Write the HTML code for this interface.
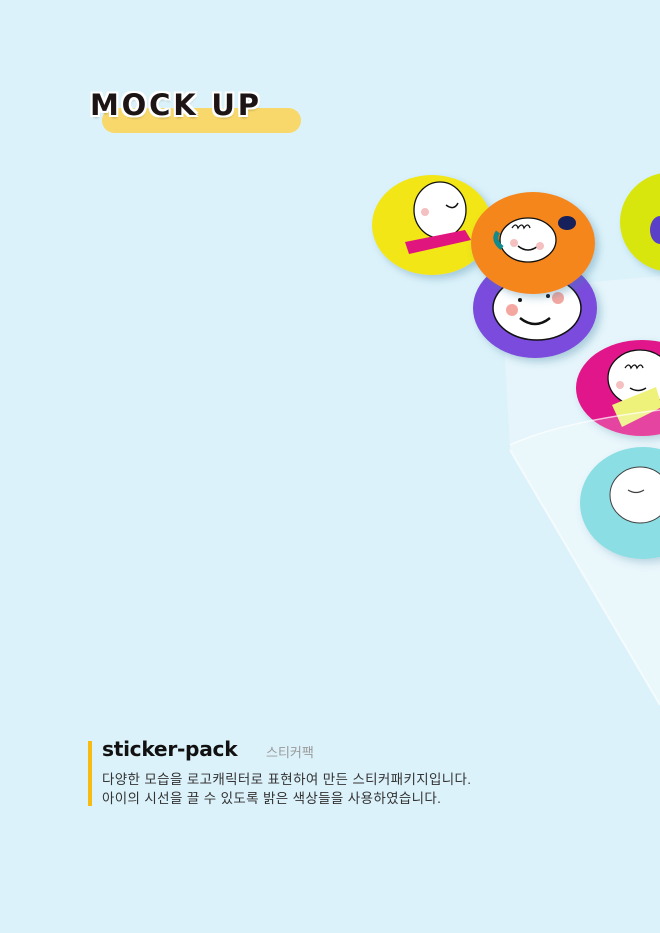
<!DOCTYPE html>
<html><head><meta charset="utf-8"><style>
html,body{margin:0;padding:0}
body{width:660px;height:933px;background:#dcf2fa;position:relative;overflow:hidden;font-family:"Liberation Sans","Noto Sans CJK KR",sans-serif}
.bar{position:absolute;left:102px;top:108px;width:199px;height:25px;border-radius:13px;background:#f8d86a}
.mock{position:absolute;left:90px;top:88px;font-size:29px;font-weight:bold;letter-spacing:2.8px;color:#1d1416;text-shadow:2px 0 #fff,-2px 0 #fff,0 2px #fff,0 -2px #fff,2px 2px #fff,-2px -2px #fff,2px -2px #fff,-2px 2px #fff,1px 3px 2px rgba(0,0,0,.2);font-family:"DejaVu Sans","Liberation Sans",sans-serif}
.vb{position:absolute;left:88px;top:741px;width:4px;height:65px;background:#f7bb12}
.t1{position:absolute;left:102px;top:737px;font-size:20.2px;font-weight:bold;color:#111;font-family:"DejaVu Sans",sans-serif;letter-spacing:-.3px}
.t2{position:absolute;left:266px;top:742px;font-size:13px;color:#999}
.p{position:absolute;left:102px;top:770px;font-size:13.5px;letter-spacing:.35px;line-height:19px;color:#333;white-space:nowrap}
svg{position:absolute;left:0;top:0}
</style></head><body>
<div class="bar"></div>
<div class="mock">MOCK UP</div>
<svg width="660" height="933">
<defs><filter id="s" x="-20%" y="-20%" width="150%" height="150%"><feDropShadow dx="4" dy="4" stdDeviation="4" flood-color="#3a7fa0" flood-opacity=".35"/></filter></defs>
<path d="M505 360 Q505 290 570 284 L660 276 L660 705 L510 450 Z" fill="#fff" fill-opacity=".25"/>
<g filter="url(#s)">
<ellipse cx="432" cy="225" rx="60" ry="50" fill="#f2e614"/>
<ellipse cx="672" cy="222" rx="52" ry="50" fill="#d8e60f"/>
<ellipse cx="535" cy="308" rx="62" ry="50" fill="#7a4bdc"/>
<ellipse cx="642" cy="388" rx="66" ry="48" fill="#e0178a"/>
<ellipse cx="643" cy="503" rx="63" ry="56" fill="#6ed6dc"/>
</g>
<ellipse cx="537" cy="308" rx="44" ry="32" fill="#fff" stroke="#111" stroke-width="1.5"/>
<path d="M520 318 q15 12 30 0" stroke="#111" stroke-width="2.5" fill="none"/>
<circle cx="512" cy="310" r="6" fill="#f4a7a0"/><circle cx="558" cy="298" r="6" fill="#f4a7a0"/>
<circle cx="520" cy="300" r="2" fill="#111"/><circle cx="548" cy="296" r="2" fill="#111"/>
<ellipse cx="440" cy="210" rx="26" ry="28" fill="#fff" stroke="#111" stroke-width="1.3"/>
<path d="M446 205 q8 6 12 -2" stroke="#111" stroke-width="1.5" fill="none"/>
<circle cx="425" cy="212" r="4" fill="#f4c0c0"/>
<path d="M405 242 l60 -12 l6 10 l-62 14z" fill="#e0157e"/>
<g filter="url(#s)"><ellipse cx="533" cy="243" rx="62" ry="51" fill="#f5861a"/></g>
<ellipse cx="528" cy="240" rx="28" ry="22" fill="#fff" stroke="#111" stroke-width="1.3"/>
<path d="M518 246 q10 8 20 0" stroke="#111" stroke-width="1.5" fill="none"/>
<path d="M512 228 q4 -6 6 0 q4 -6 6 0 q4 -6 6 0" stroke="#111" stroke-width="1.3" fill="none"/>
<circle cx="514" cy="243" r="4" fill="#f4c0c0"/><circle cx="540" cy="246" r="4" fill="#f4c0c0"/>
<path d="M498 232 q-6 8 4 16" stroke="#158a8a" stroke-width="5" fill="none"/>
<ellipse cx="567" cy="223" rx="9" ry="7" fill="#16205a"/>
<ellipse cx="640" cy="378" rx="32" ry="28" fill="#fff" stroke="#111" stroke-width="1.3"/>
<path d="M625 368 q4 -6 6 0 q4 -6 6 0 q4 -6 6 0" stroke="#111" stroke-width="1.3" fill="none"/>
<path d="M630 388 q8 5 16 0" stroke="#111" stroke-width="1.5" fill="none"/>
<circle cx="620" cy="385" r="4" fill="#f4c0c0"/>
<ellipse cx="640" cy="495" rx="30" ry="28" fill="#fff" stroke="#111" stroke-width="1"/>
<path d="M628 490 q8 5 16 0" stroke="#111" stroke-width="1.3" fill="none"/>
<path d="M612 405 l44 -18 l6 20 l-40 20z" fill="#eef27a"/>
<ellipse cx="660" cy="230" rx="10" ry="14" fill="#5a3fc8"/>
<path d="M510 445 Q560 422 660 410 L660 705 L510 450 Z" fill="#fff" fill-opacity=".2"/>
<path d="M510 445 Q560 422 660 410" stroke="#fff" stroke-opacity=".7" stroke-width="1.5" fill="none"/>
<path d="M510 450 L660 705" stroke="#fff" stroke-opacity=".6" stroke-width="2"/>
</svg>
<div class="vb"></div>
<div class="t1">sticker-pack</div>
<div class="t2">스티커팩</div>
<div class="p">다양한 모습을 로고캐릭터로 표현하여 만든 스티커패키지입니다.<br>아이의 시선을 끌 수 있도록 밝은 색상들을 사용하였습니다.</div>
</body></html>
